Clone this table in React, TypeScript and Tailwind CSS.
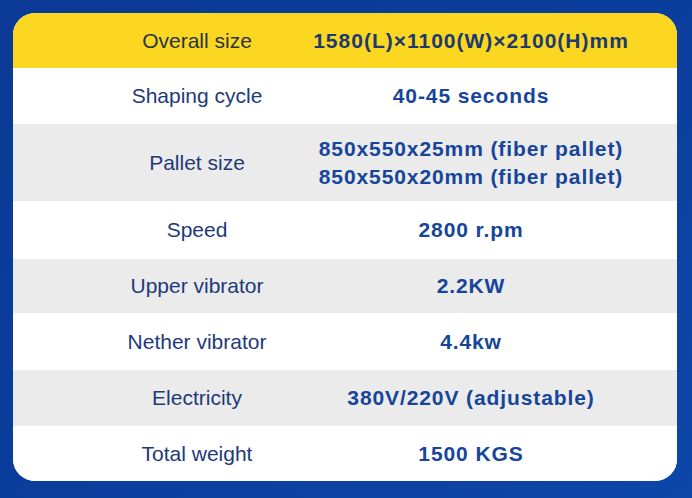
import React from "react";

type Spec = {
    label: string;
    value: string[];
    h: string;
    bg: string;
};

const specs: Spec[] = [
    { label: "Shaping cycle", value: ["40-45 seconds"], h: "h-[56px]", bg: "bg-white" },
    {
        label: "Pallet size",
        value: ["850x550x25mm (fiber pallet)", "850x550x20mm (fiber pallet)"],
        h: "h-[77px]",
        bg: "bg-[#ebebeb]",
    },
    { label: "Speed", value: ["2800 r.pm"], h: "h-[58px]", bg: "bg-white" },
    { label: "Upper vibrator", value: ["2.2KW"], h: "h-[54px]", bg: "bg-[#ebebeb]" },
    { label: "Nether vibrator", value: ["4.4kw"], h: "h-[57px]", bg: "bg-white" },
    { label: "Electricity", value: ["380V/220V (adjustable)"], h: "h-[56px]", bg: "bg-[#ebebeb]" },
    { label: "Total weight", value: ["1500 KGS"], h: "h-[55px]", bg: "bg-white" },
];

export default function App() {
    return (
        <div
            className="w-[692px] h-[498px] bg-gradient-to-br from-[#0a3a95] via-[#0b3d9c] to-[#0d47aa] pt-[13px] pl-[13px]"
            style={{ fontFamily: '"Liberation Sans", Arial, sans-serif' }}
        >
            <div className="w-[664px] h-[468px] rounded-[22px] overflow-hidden bg-white flex flex-col">
                {/* header row */}
                <div className="h-[55px] bg-[#fcd721] grid grid-cols-[322px_minmax(0,1fr)] items-center">
                    <div className="pl-[46px] text-center text-[21px] text-[#2a3442]">Overall size</div>
                    <div className="pr-[70px] flex flex-col items-center whitespace-nowrap text-[21px] font-bold tracking-[1px] text-[#1d3a6e]">
                        <div>1580(L)×1100(W)×2100(H)mm</div>
                    </div>
                </div>

                {specs.map((s) => (
                    <div key={s.label} className={`${s.h} ${s.bg} grid grid-cols-[322px_minmax(0,1fr)] items-center`}>
                        <div className="pl-[46px] text-center text-[21px] text-[#1e3a78]">{s.label}</div>
                        <div className="pr-[70px] flex flex-col items-center whitespace-nowrap text-[21px] font-bold tracking-[0.9px] text-[#16459a] leading-[28px]">
                            {s.value.map((v) => (
                                <div key={v}>{v}</div>
                            ))}
                        </div>
                    </div>
                ))}
            </div>
        </div>
    );
}
